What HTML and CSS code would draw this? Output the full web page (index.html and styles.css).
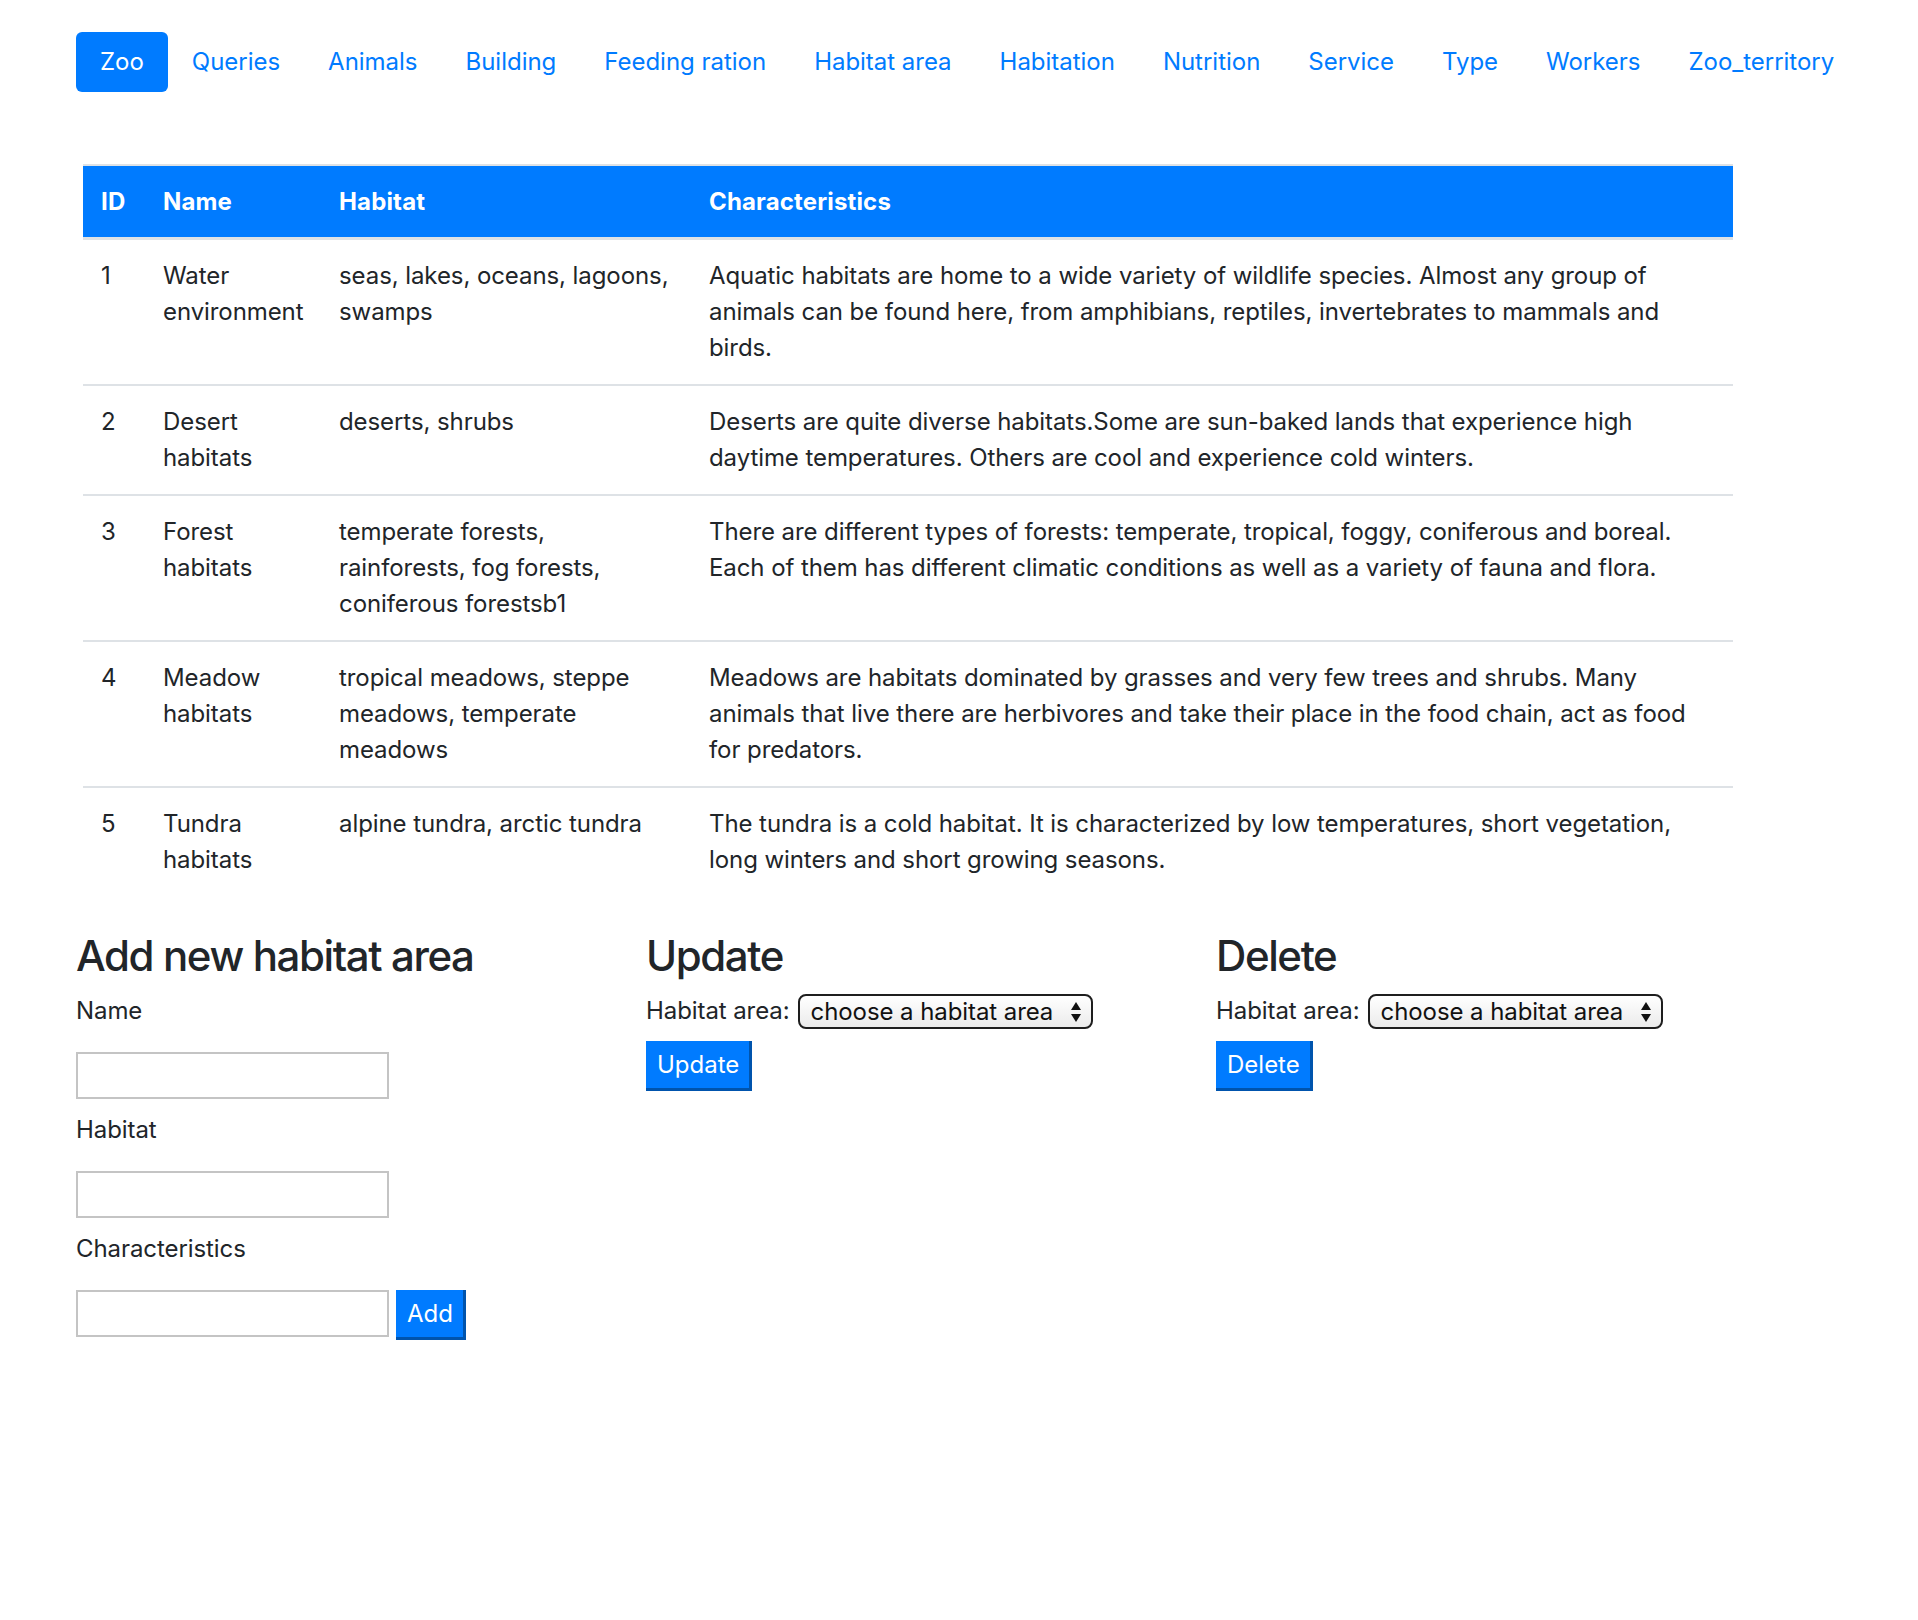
FILE: index.html
```html
<!DOCTYPE html>
<html lang="en">
<head>
<meta charset="utf-8">
<title>Habitat area</title>
<link rel="stylesheet" href="styles.css">
</head>
<body>
<div class="page">
  <ul class="nav">
    <li><a class="nav-link active" href="#">Zoo</a></li>
    <li><a class="nav-link" href="#">Queries</a></li>
    <li><a class="nav-link" href="#">Animals</a></li>
    <li><a class="nav-link" href="#">Building</a></li>
    <li><a class="nav-link" href="#">Feeding ration</a></li>
    <li><a class="nav-link" href="#">Habitat area</a></li>
    <li><a class="nav-link" href="#">Habitation</a></li>
    <li><a class="nav-link" href="#">Nutrition</a></li>
    <li><a class="nav-link" href="#">Service</a></li>
    <li><a class="nav-link" href="#">Type</a></li>
    <li><a class="nav-link" href="#">Workers</a></li>
    <li><a class="nav-link" href="#">Zoo_territory</a></li>
  </ul>

  <div class="table-wrap">
    <table class="data">
      <colgroup>
        <col class="c-id"><col class="c-name"><col class="c-hab"><col class="c-char">
      </colgroup>
      <thead>
        <tr><th>ID</th><th>Name</th><th>Habitat</th><th>Characteristics</th></tr>
      </thead>
      <tbody>
        <tr><td>1</td><td>Water environment</td><td>seas, lakes, oceans, lagoons, swamps</td><td>Aquatic habitats are home to a wide variety of wildlife species. Almost any group of animals can be found here, from amphibians, reptiles, invertebrates to mammals and birds.</td></tr>
        <tr><td>2</td><td>Desert habitats</td><td>deserts, shrubs</td><td>Deserts are quite diverse habitats.Some are sun-baked lands that experience high daytime temperatures. Others are cool and experience cold winters.</td></tr>
        <tr><td>3</td><td>Forest habitats</td><td>temperate forests, rainforests, fog forests, coniferous forestsb1</td><td>There are different types of forests: temperate, tropical, foggy, coniferous and boreal. Each of them has different climatic conditions as well as a variety of fauna and flora.</td></tr>
        <tr><td>4</td><td>Meadow habitats</td><td>tropical meadows, steppe meadows, temperate meadows</td><td>Meadows are habitats dominated by grasses and very few trees and shrubs. Many animals that live there are herbivores and take their place in the food chain, act as food for predators.</td></tr>
        <tr><td>5</td><td>Tundra habitats</td><td>alpine tundra, arctic tundra</td><td>The tundra is a cold habitat. It is characterized by low temperatures, short vegetation, long winters and short growing seasons.</td></tr>
      </tbody>
    </table>
  </div>

  <div class="forms">
    <section class="form-col">
      <h3 class="form-title">Add new habitat area</h3>
      <label class="field-label" for="f-name">Name</label>
      <input class="text-input" id="f-name" type="text">
      <label class="field-label" for="f-hab">Habitat</label>
      <input class="text-input" id="f-hab" type="text">
      <label class="field-label" for="f-char">Characteristics</label>
      <div class="input-row">
        <input class="text-input" id="f-char" type="text">
        <button class="btn" type="button">Add</button>
      </div>
    </section>

    <section class="form-col">
      <h3 class="form-title">Update</h3>
      <div class="select-row">
        <label class="inline-label" for="u-sel">Habitat area:</label>
        <span class="select-wrap">
          <select class="select" id="u-sel"><option>choose a habitat area</option></select>
          <svg class="select-arrows" width="12" height="22" viewBox="0 0 12 22"><path d="M6 1 L11 9 L1 9 Z M6 21 L11 13 L1 13 Z" fill="#111"/></svg>
        </span>
      </div>
      <button class="btn" type="button">Update</button>
    </section>

    <section class="form-col">
      <h3 class="form-title">Delete</h3>
      <div class="select-row">
        <label class="inline-label" for="d-sel">Habitat area:</label>
        <span class="select-wrap">
          <select class="select" id="d-sel"><option>choose a habitat area</option></select>
          <svg class="select-arrows" width="12" height="22" viewBox="0 0 12 22"><path d="M6 1 L11 9 L1 9 Z M6 21 L11 13 L1 13 Z" fill="#111"/></svg>
        </span>
      </div>
      <button class="btn" type="button">Delete</button>
    </section>
  </div>
</div>
</body>
</html>
```

FILE: styles.css
```css
* { box-sizing: border-box; }

html, body {
  margin: 0;
  background: #fff;
}

body {
  font-family: Inter, "Liberation Sans", Arial, sans-serif;
  font-size: 24px;
  line-height: 36px;
  color: #212529;
  letter-spacing: -0.08px;
}

.page {
  padding: 32px 0 0 76px;
}

/* nav */
.nav {
  list-style: none;
  margin: 0 0 72px 0;
  padding: 0;
  display: flex;
}

.nav-link {
  display: block;
  height: 60px;
  padding: 12px 24px;
  color: #007bff;
  text-decoration: none;
  border-radius: 6px;
  letter-spacing: -0.02px;
}

.nav-link.active {
  background: #007bff;
  color: #fff;
}

/* table */
.table-wrap {
  margin-left: 7px;
}

.data {
  width: 1650px;
  border-collapse: collapse;
  table-layout: fixed;
}

.c-id { width: 62px; }
.c-name { width: 176px; }
.c-hab { width: 370px; }
.c-char { width: 1042px; }

.data th {
  background: #007bff;
  color: #fff;
  font-weight: 700;
  letter-spacing: 0.15px;
  text-align: left;
  padding: 18px 18px 17px;
  border-top: 2px solid #dee2e6;
  border-bottom: 3px solid #dee2e6;
  vertical-align: bottom;
}

.data td {
  padding: 18px;
  vertical-align: top;
  border-top: 2px solid #dee2e6;
}

.data tbody tr:first-child td {
  border-top: 0;
}

/* forms */
.forms {
  margin-top: 35px;
  display: grid;
  grid-template-columns: 570px 570px 570px;
}

.form-col {
  display: flex;
  flex-direction: column;
  align-items: flex-start;
}

.form-title {
  margin: 0 0 12px 0;
  font-size: 42px;
  line-height: 1.2;
  font-weight: 500;
  letter-spacing: -1.4px;
  color: #212529;
}

.field-label {
  display: block;
  margin-bottom: 23px;
}

.text-input {
  display: block;
  width: 313px;
  height: 47px;
  margin: 0 0 13px 0;
  border: 2px solid #c4c4c4;
  background: #fff;
  font: inherit;
  padding: 0 6px;
}

.input-row {
  display: flex;
  align-items: flex-start;
  gap: 7px;
}

.input-row .text-input {
  margin: 0;
}

.btn {
  height: 50px;
  padding: 0 10px 0 11px;
  background: #007bff;
  color: #fff;
  font-family: inherit;
  font-size: 24px;
  line-height: 47px;
  border: 0;
  border-right: 3px solid #0054ad;
  border-bottom: 3px solid #0054ad;
  border-radius: 0;
  cursor: pointer;
}

.select-row {
  display: flex;
  align-items: center;
  height: 36px;
  margin-bottom: 12px;
  gap: 8px;
}

.select-wrap {
  position: relative;
  display: inline-block;
}

.select {
  appearance: none;
  -webkit-appearance: none;
  width: 295px;
  height: 35px;
  padding: 0 30px 0 11px;
  font-family: inherit;
  font-size: 24px;
  letter-spacing: -0.08px;
  color: #111;
  border: 2px solid #1e1e1e;
  border-radius: 8px;
  background: linear-gradient(#ffffff, #ebebeb);
  display: block;
}

.select-arrows {
  position: absolute;
  right: 11px;
  top: 7px;
  pointer-events: none;
}
```
